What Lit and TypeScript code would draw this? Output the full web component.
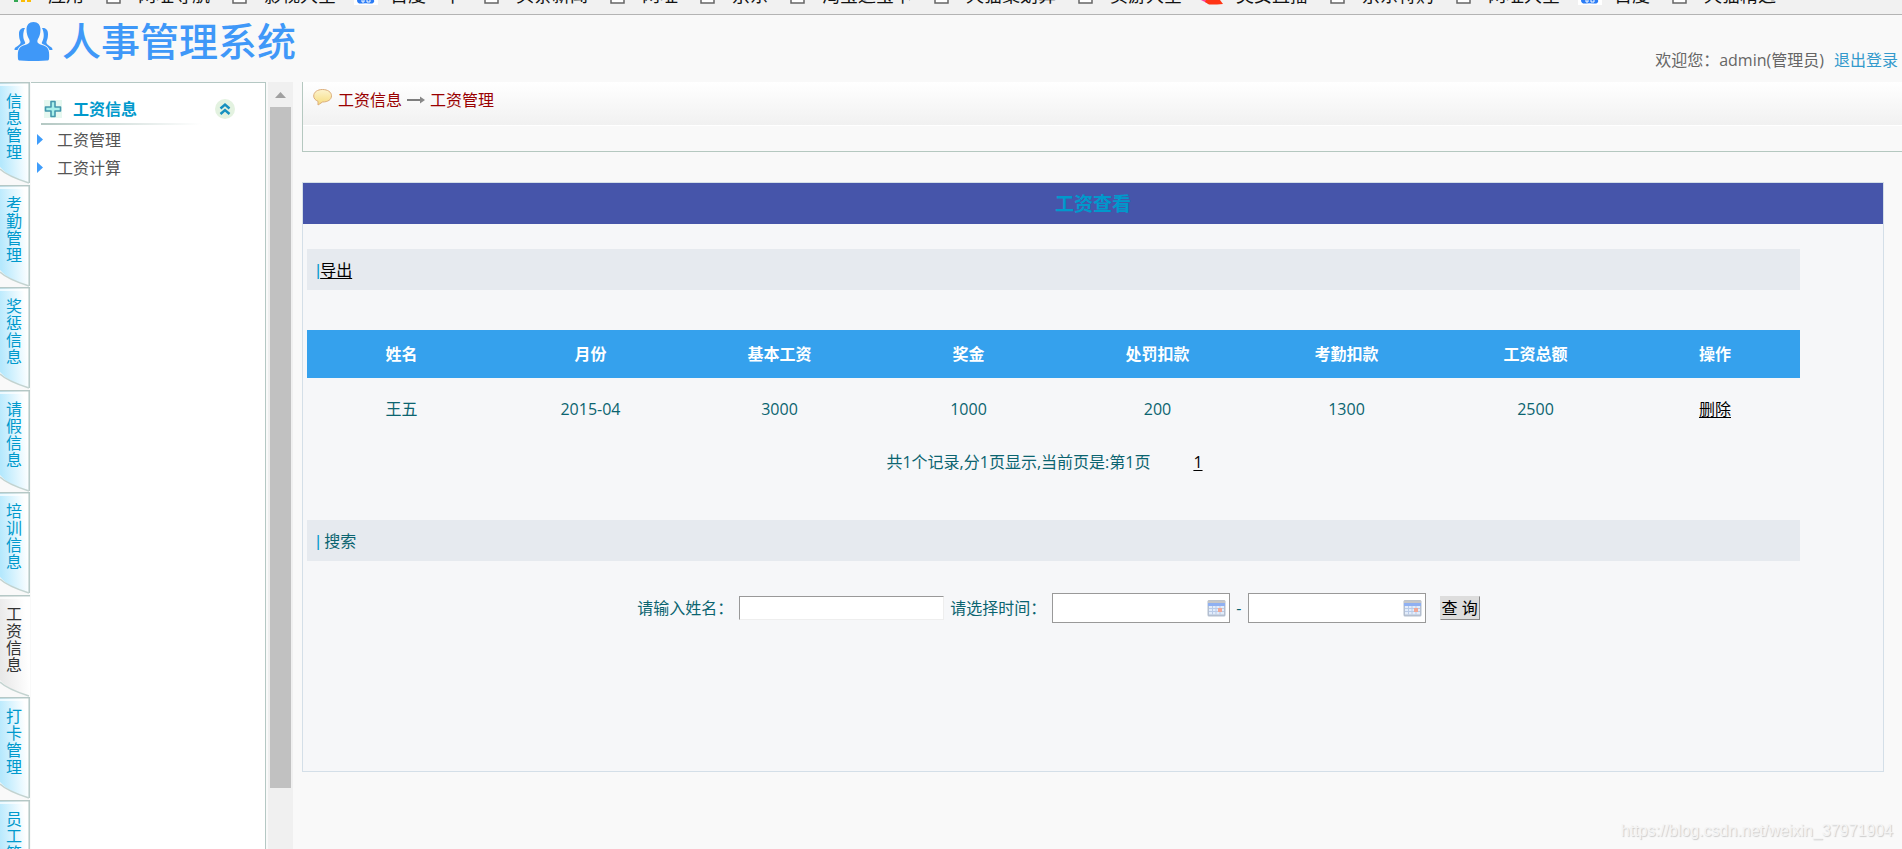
import { LitElement, html, css, svg } from "lit";
import { customElement, state } from "lit/decorators.js";
import { classMap } from "lit/directives/class-map.js";

type Bookmark = { kind: "apps" | "page" | "paw" | "bird"; text: string };

const BOOKMARKS: Bookmark[] = [
  { kind: "apps", text: "应用" },
  { kind: "page", text: "网址导航" },
  { kind: "page", text: "影视大全" },
  { kind: "paw", text: "百度一下" },
  { kind: "page", text: "头条新闻" },
  { kind: "page", text: "网址" },
  { kind: "page", text: "京东" },
  { kind: "page", text: "淘宝逛宝卡" },
  { kind: "page", text: "天猫聚划算" },
  { kind: "page", text: "页游大全" },
  { kind: "bird", text: "美女直播" },
  { kind: "page", text: "京东特购" },
  { kind: "page", text: "网址大全" },
  { kind: "paw", text: "百度" },
  { kind: "page", text: "天猫精选" },
];

const TABS = ["信息管理", "考勤管理", "奖惩信息", "请假信息", "培训信息", "工资信息", "打卡管理", "员工管理"];

const COLUMNS = ["姓名", "月份", "基本工资", "奖金", "处罚扣款", "考勤扣款", "工资总额", "操作"];
const ROWS = [["王五", "2015-04", "3000", "1000", "200", "1300", "2500"]];

@customElement("bookmark-bar")
class BookmarkBar extends LitElement {
  static styles = css`
    :host {
      display: block;
      background: #f1f1f1;
      border-bottom: 1px solid #b4b4b4;
    }
    .bar {
      display: flex;
      align-items: flex-end;
      height: 14px;
      padding-left: 13px;
      gap: 22px;
      overflow: hidden;
      white-space: nowrap;
    }
    .item {
      display: flex;
      align-items: flex-end;
      gap: 17px;
      color: #111;
      font-size: 18px;
      line-height: 20px;
      text-decoration: none;
    }
    .item.wide { gap: 12px; margin-left: -4px; }
    .text { padding-bottom: 9px; }
    svg { display: block; flex: none; }
  `;
  private icon(kind: Bookmark["kind"]) {
    if (kind === "apps")
      return html`<svg width="18" height="14" viewBox="0 0 18 14">
        <path fill="#34a853" d="M1 0h4v2H1z" /><path fill="#fbbc05" d="M8 0h4v2H8zM14 0h4v2h-4z" />
      </svg>`;
    if (kind === "paw")
      return html`<svg width="24" height="14" viewBox="0 0 24 14">
        <path fill="#fff" d="M0 0h24v5H0z" />
        <path fill="#2b7cf6" d="M3 0h17c1 3-2 4-5 3.500Q11.500 3 8 3.500C5 4 3 3 3 0z" />
        <path fill="none" stroke="#fff" stroke-width="1" d="M8 0v2h2V0M13 0v2h3V0" />
      </svg>`;
    if (kind === "bird")
      return html`<svg width="24" height="14" viewBox="0 0 24 14">
        <path fill="#ff3d9a" d="M1 0h8v4z" /><path fill="#ff3414" d="M6 0h14l3 4-6 .5H9L5 2z" />
      </svg>`;
    return html`<svg width="15" height="14" viewBox="0 0 15 14">
      <path fill="#fff" stroke="#666" stroke-width="1.500" d="M1-3v6h13v-6" />
    </svg>`;
  }
  render() {
    return html`<nav class="bar" aria-label="书签">
      ${BOOKMARKS.map(
        (b) => html`<a class=${classMap({ item: true, wide: b.kind === "paw" || b.kind === "bird" })} href="#">
          ${this.icon(b.kind)}<span class="text">${b.text}</span>
        </a>`
      )}
    </nav>`;
  }
}

@customElement("side-tabs")
class SideTabs extends LitElement {
  @state() private active = 5;
  static styles = css`
    :host { display: block; width: 31px; flex: none; }
    .tab {
      display: grid;
      width: 31px;
      height: 102px;
      padding: 0;
      border: 0;
      background: none;
      font: inherit;
      cursor: pointer;
      color: #0099cc;
    }
    .tab:nth-child(odd) { height: 103px; }
    .tab.active { color: #333; }
    .shape, .label { grid-area: 1 / 1; }
    .shape { display: block; }
    .label {
      width: 16px;
      margin: 11px 0 0 6px;
      font-size: 16px;
      line-height: 17px;
      text-align: left;
      word-break: break-all;
    }
  `;
  render() {
    return html`${TABS.map((t, i) => {
      const on = i === this.active;
      return html`<button class=${classMap({ tab: true, active: on })} @click=${() => (this.active = i)}>
        <svg class="shape" width="31" height="102" viewBox="0 0 31 102">
          <defs>
            <linearGradient id=${`fill-${i}`} x1="0" y1=".6" x2="1" y2=".4">
              <stop offset="0" stop-color=${on ? "#e8e8e8" : "#b4e8fd"} />
              <stop offset=".9" stop-color="#fff" />
            </linearGradient>
          </defs>
          <path fill=${`url(#fill-${i})`} d="M0 1h30v101Q8 95 0 85z" />
          <path fill="none" stroke="#fff" stroke-width="2" opacity=".7" d="M0 3h28" />
          <path fill="none" stroke="#b5c8c6" stroke-width="1.500" d="M0 .7h30" />
          ${on ? "" : svg`<path fill="none" stroke="#b5c8c6" stroke-width="1.500" d="M29.200 0v101" />`}
          <path fill="none" stroke="#c3d3d0" stroke-width="1.500" d="M0 87Q7 94 29 101" />
        </svg>
        <span class="label">${t}</span>
      </button>`;
    })}`;
  }
}

@customElement("side-menu")
class SideMenu extends LitElement {
  static styles = css`
    :host {
      display: block;
      width: 234px;
      flex: none;
      background: #fff;
      border: 1px solid #b5c8c4;
      border-width: 1px 1px 0 0;
    }
    .head {
      display: flex;
      align-items: center;
      height: 29px;
      padding: 11px 30px 0 13px;
    }
    .head h2 {
      flex: 1;
      margin: 0 0 0 11px;
      font-size: 16px;
      line-height: 24px;
      color: #0099cc;
    }
    .toggle { display: block; padding: 0; border: 0; background: none; line-height: 0; }
    .rule { width: 160px; height: 2px; margin-left: 10px; background: linear-gradient(90deg, #b4c8c3, #fff); }
    ul { margin: 0; padding: 0; list-style: none; }
    a {
      display: flex;
      align-items: center;
      gap: 14px;
      height: 28px;
      padding-left: 6px;
      font-size: 16px;
      color: #555;
      text-decoration: none;
    }
  `;
  render() {
    return html`
      <div class="head">
        <svg width="18" height="18" viewBox="0 0 18 18">
          <path fill="#e6f8f0" d="M0 0h18v18H0z" />
          <path fill="#a9f0ea" stroke="#4598ad" stroke-width="1.600" stroke-linejoin="round" d="M7 1.500h4V7h5.500v4H11v5.500H7V11H1.500V7H7z" />
        </svg>
        <h2>工资信息</h2>
        <button class="toggle" aria-label="收起">
          <svg width="20" height="20" viewBox="0 0 20 20">
            <circle cx="10" cy="10" r="10" fill="#e3f2e0" />
            <path fill="none" stroke="#1690c0" stroke-width="2.400" d="M5.500 9.500 10 5.500l4.500 4M5.500 15 10 11l4.500 4" />
          </svg>
        </button>
      </div>
      <div class="rule"></div>
      <ul>
        ${["工资管理", "工资计算"].map(
          (t) => html`<li><a href="#">
            <svg width="6" height="11" viewBox="0 0 6 11"><path fill="#3f9dfb" d="M0 0l6 5.500L0 11z" /></svg>${t}</a></li>`
        )}
      </ul>`;
  }
}

@customElement("salary-panel")
class SalaryPanel extends LitElement {
  static styles = css`
    :host {
      display: block;
      margin: 30px 18px 0 0;
      padding-bottom: 148px;
      border: 1px solid #d4dfe8;
      background: #f6f7f9;
      color: #0b6470;
      font-size: 16px;
      line-height: 24px;
    }
    h1 {
      margin: 0;
      padding-top: 2px;
      background: #4655aa;
      color: #0099cc;
      font-size: 19px;
      line-height: 39px;
      text-align: center;
    }
    .body { margin: 25px 83px 0 4px; }
    .section {
      height: 41px;
      padding-left: 9px;
      background: #e6eaef;
      line-height: 43px;
    }
    .bar { font-family: "Liberation Sans", sans-serif; color: #0099cc; }
    a { color: #000; text-underline-offset: 2px; }
    table {
      width: 100%;
      margin-top: 40px;
      border-collapse: collapse;
      table-layout: fixed;
    }
    th, td { padding: 0; text-align: center; }
    th { height: 48px; background: #35a1ed; color: #fff; }
    th:last-child { width: 170px; }
    td { height: 62px; }
    .pager {
      display: flex;
      justify-content: center;
      gap: 43px;
      padding: 10px 18px 46px 0;
    }
    form {
      display: flex;
      align-items: center;
      justify-content: center;
      gap: 6px;
      padding: 32px 0 0 10px;
    }
    input { box-sizing: border-box; font: inherit; outline: 0; padding: 0 2px; }
    .name {
      width: 205px;
      height: 24px;
      border: 1px solid #eee;
      border-color: #999 #eee #eee #999;
      background: #fff;
    }
    .date {
      box-sizing: border-box;
      display: flex;
      align-items: center;
      width: 178px;
      height: 30px;
      border: 1px solid #999;
      background: #fff;
    }
    .date input { flex: 1; min-width: 0; height: 28px; border: 0; background: none; }
    .date button { padding: 0 3px; border: 0; background: none; line-height: 0; }
    .go {
      height: 24px;
      margin-left: 8px;
      padding: 0 1px;
      border: 1px solid #ddd;
      border-color: #ddd #888 #888 #ddd;
      background: #ddd;
      font: inherit;
      line-height: 20px;
      color: #000;
    }
  `;
  private calendar() {
    return html`<button type="button" aria-label="选择日期">
      <svg width="19" height="18" viewBox="0 0 19 18">
        <rect x=".5" y="1" width="18" height="16.500" rx="1.500" fill="#b4bfd0" />
        <path fill="#c6c6c6" d="M1 1.500h17V4H1z" />
        <path fill="#8fb0f2" d="M1 4h17v3H1z" />
        <path fill="#e2ecfb" d="M2 7h15v8.500H2z" />
        <path stroke="#b9cbe8" stroke-width="1" d="M2 9.500h15M2 12.500h15M5.500 7v8.500M9 7v8.500M13 7v8.500" />
        <path fill="#f0a898" d="M11 9h4v4h-4z" />
      </svg>
    </button>`;
  }
  render() {
    return html`
      <h1>工资查看</h1>
      <div class="body">
        <div class="section"><span class="bar">|</span><a href="#">导出</a></div>
        <table>
          <thead><tr>${COLUMNS.map((c) => html`<th scope="col">${c}</th>`)}</tr></thead>
          <tbody>
            ${ROWS.map((r) => html`<tr>${r.map((v) => html`<td>${v}</td>`)}<td><a href="#">删除</a></td></tr>`)}
          </tbody>
        </table>
        <div class="pager"><span>共1个记录,分1页显示,当前页是:第1页</span><a href="#">1</a></div>
        <div class="section"><span class="bar">|</span> 搜索</div>
        <form @submit=${(e: Event) => e.preventDefault()}>
          <label for="name">请输入姓名：</label>
          <input class="name" id="name" type="text" />
          <label for="from">请选择时间：</label>
          <span class="date"><input id="from" type="text" />${this.calendar()}</span>
          <span>-</span>
          <span class="date"><input type="text" aria-label="结束时间" />${this.calendar()}</span>
          <button class="go">查 询</button>
        </form>
      </div>`;
  }
}

@customElement("app-root")
class AppRoot extends LitElement {
  static styles = css`
    :host {
      position: relative;
      display: flex;
      flex-direction: column;
      height: 100vh;
      overflow: hidden;
      background: #f9f9f9;
      font-family: "Open Sans", "Noto Sans CJK SC", sans-serif;
      font-size: 16px;
    }
    .header {
      display: flex;
      justify-content: space-between;
      height: 67px;
      flex: none;
      padding: 0 4px 0 14px;
    }
    .logo { display: flex; align-items: center; gap: 9px; height: 52px; color: #3f98f8; }
    .logo-text { font-size: 39px; font-weight: 500; line-height: 48px; white-space: nowrap; }
    .user {
      display: flex;
      gap: 10px;
      align-self: flex-end;
      padding-bottom: 10px;
      color: #666;
      line-height: 24px;
    }
    .user a { color: #3399cc; text-decoration: none; }
    .content { display: flex; flex: 1; min-height: 0; }
    .track {
      display: flex;
      flex-direction: column;
      align-items: center;
      width: 25px;
      flex: none;
      margin: 0 9px 0 2px;
      background: #f0f0f0;
    }
    .track svg { flex: none; }
    .thumb { flex: 681; width: 21px; background: #c1c1c1; }
    .rest { flex: 61; }
    main { flex: 1; min-width: 0; }
    .crumbs { border: 1px solid #b5c8c0; border-width: 0 0 1px 1px; }
    .path {
      display: flex;
      align-items: flex-start;
      height: 37px;
      padding: 6px 0 0 10px;
      border-bottom: 1px solid #fff;
      background: linear-gradient(#fff, #f1f1f1);
      color: #990000;
      line-height: 24px;
    }
    .path svg { flex: none; }
    .bubble { margin-right: 6px; }
    .arrow { margin: 6px 5px 0 5px; }
    .strip { height: 25px; }
    .mark {
      position: absolute;
      right: 9px;
      bottom: 8px;
      font-family: "Liberation Sans", sans-serif;
      font-size: 16px;
      line-height: 20px;
      color: #f4f4f4;
      text-shadow: 1px 1px 1px #ccc;
    }
  `;
  render() {
    return html`
      <bookmark-bar></bookmark-bar>
      <header class="header">
        <div class="logo">
          <svg width="39" height="40" viewBox="0 0 39 40" fill="currentColor">
            <path d="M19.500 1c4.500 0 7 3 7 7.500 0 4-1 7-2.500 9.500-.7 1.200-1 3 0 4 2 2 6 2 8.500 4 2.500 2 3 6 2.500 12-.2 1.500-1 1.500-2 1.600-8 .6-19 .6-27 0-1 0-1.800-.2-2-1.600-.5-6 0-10 2.500-12 2.500-2 6.500-2 8.500-4 1-1 .7-2.800 0-4-1.500-2.500-2.500-5.500-2.500-9.500C12.500 4 15 1 19.500 1z" />
            <path d="M11 7C7 6.500 5 9 5 13c0 3 .5 5 1.300 7 .8 2 0 3-2 4.500C1.500 26.500.5 26.500.5 29h3c1-3 4-5 7-6 1-.5 1-1 0-3-1.500-3-2-8 .5-13zM28 7c4-.5 6 2 6 6 0 3-.5 5-1.300 7-.8 2 0 3 2 4.500 2.800 2 3.800 2 3.800 4.500h-3c-1-3-4-5-7-6-1-.5-1-1 0-3 1.500-3 2-8-.5-13z" />
          </svg>
          <span class="logo-text">人事管理系统</span>
        </div>
        <div class="user"><span>欢迎您：admin(管理员)</span><a href="#">退出登录</a></div>
      </header>
      <div class="content">
        <side-tabs></side-tabs>
        <side-menu></side-menu>
        <div class="track">
          <svg width="21" height="25" viewBox="0 0 21 25"><path fill="#a0a0a0" d="M5 16l5.500-6 5.500 6z" /></svg>
          <div class="thumb"></div>
          <div class="rest"></div>
        </div>
        <main>
          <div class="crumbs">
            <div class="path">
              <svg class="bubble" width="19" height="18" viewBox="0 0 19 18">
                <defs>
                  <linearGradient id="bubble-fill" x1="0" y1="0" x2="0" y2="1">
                    <stop offset="0" stop-color="#fdf3cf" /><stop offset="1" stop-color="#f6dc7c" />
                  </linearGradient>
                </defs>
                <path fill="url(#bubble-fill)" stroke="#dcae7c" d="M9.500 1.500c5 0 9 2.500 9 6.300S15 14 9.500 14L5 17V13.300C2.500 12.300.7 10.500.7 8 .7 4 4.500 1.500 9.500 1.500z" />
              </svg>
              <span>工资信息</span>
              <svg class="arrow" width="18" height="12" viewBox="0 0 18 12">
                <path stroke="#555" stroke-width="1.500" d="M0 6h15" /><path fill="#888" d="M13 2.500 18 6l-5 3.500z" />
              </svg>
              <span>工资管理</span>
            </div>
            <div class="strip"></div>
          </div>
          <salary-panel></salary-panel>
        </main>
      </div>
      <div class="mark">https://blog.csdn.net/weixin_37971904</div>
    `;
  }
}
